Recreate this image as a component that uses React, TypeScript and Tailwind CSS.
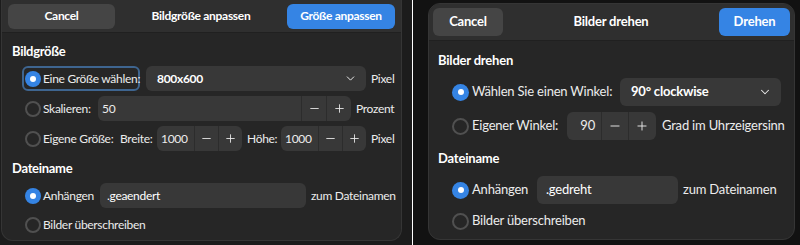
import React from 'react'
import { ChevronDown, Minus, Plus } from 'lucide-react'

type radioProps = {
    checked?: boolean
    size: number
}

const Radio: React.FC<radioProps> = ({ checked, size }) => {
    if (checked) {
        return (
            <span className="flex items-center justify-center rounded-full bg-[#3584e4] shrink-0" style={{ width: size, height: size }}>
                <span className="w-[6px] h-[6px] rounded-full bg-white" />
            </span>
        )
    }
    return <span className="rounded-full border-2 border-[#505050] shrink-0" style={{ width: size, height: size }} />
}

type spinProps = {
    value: string
    w: string
    textW: string
    btnW: string
    right?: boolean
    icon: number
}

const Spin: React.FC<spinProps> = ({ value, w, textW, btnW, right, icon }) => {
    return (
        <div className={`flex h-full shrink-0 rounded-[6px] bg-[#383838] ${w}`}>
            <div className={`flex items-center h-full px-[4px] ${textW} ${right ? 'justify-end pr-[6px]' : ''}`}>{value}</div>
            <div className={`flex items-center justify-center h-full border-l border-[#2c2c2c] ${btnW}`}>
                <Minus size={icon} strokeWidth={1.6} />
            </div>
            <div className={`flex items-center justify-center h-full border-l border-[#2c2c2c] ${btnW}`}>
                <Plus size={icon} strokeWidth={1.6} />
            </div>
        </div>
    )
}

const ResizeDialog = () => {
    return (
        <div className="w-[401px] h-[241px] ml-[1px] flex flex-col rounded-b-[12px] bg-[#262626] border-x border-b border-[#353535] overflow-hidden text-[12px] tracking-[-0.3px] text-[#ececec] whitespace-nowrap">
            <div className="h-[33px] shrink-0 flex items-center justify-between px-[6px] bg-[#2f2f2f] border-b border-[#202020]">
                <div className="w-[107px] h-[25px] rounded-[6px] bg-[#454545] flex items-center justify-center font-bold text-white">Cancel</div>
                <div className="font-bold text-white">Bildgröße anpassen</div>
                <div className="w-[108px] h-[25px] rounded-[6px] bg-[#3584e4] flex items-center justify-center font-bold text-white">Größe anpassen</div>
            </div>
            <div className="flex flex-col pl-[10px]">
                <div className="mt-[9px] h-[18px] leading-[18px] text-[13px] font-bold text-white">Bildgröße</div>

                <div className="mt-[6px] h-[25px] flex items-center ml-[10px]">
                    <div className="w-[118px] shrink-0 h-full flex items-center gap-[2px] pl-[1px] rounded-[6px] border-2 border-[#3e6590]">
                        <Radio checked size={16} />
                        <span>Eine Größe wählen:</span>
                    </div>
                    <div className="ml-[6px] w-[220px] shrink-0 h-full rounded-[6px] bg-[#383838] flex items-center justify-between pl-[11px] pr-[9px]">
                        <span className="font-bold text-white">800x600</span>
                        <ChevronDown size={13} strokeWidth={1.8} />
                    </div>
                    <span className="ml-[5px]">Pixel</span>
                </div>

                <div className="mt-[5px] h-[25px] flex items-center ml-[10px]">
                    <div className="w-[76px] shrink-0 h-full flex items-center gap-[2px] pl-[3px]">
                        <Radio size={16} />
                        <span>Skalieren:</span>
                    </div>
                    <Spin value="50" w="w-[253px]" textW="w-[204px]" btnW="w-[25px]" icon={13} />
                    <span className="ml-[5px]">Prozent</span>
                </div>

                <div className="mt-[5px] h-[25px] flex items-center ml-[10px]">
                    <div className="w-[98px] shrink-0 h-full flex items-center gap-[2px] pl-[3px]">
                        <Radio size={16} />
                        <span>Eigene Größe:</span>
                    </div>
                    <span className="w-[37px] shrink-0">Breite:</span>
                    <Spin value="1000" w="w-[85px]" textW="w-[37px]" btnW="w-[24px]" icon={13} />
                    <span className="ml-[5px] w-[34px] shrink-0">Höhe:</span>
                    <Spin value="1000" w="w-[85px]" textW="w-[37px]" btnW="w-[24px]" icon={13} />
                    <span className="ml-[5px]">Pixel</span>
                </div>

                <div className="mt-[8px] h-[18px] leading-[18px] text-[13px] font-bold text-white">Dateiname</div>

                <div className="mt-[6px] h-[25px] flex items-center ml-[10px]">
                    <div className="w-[78px] shrink-0 h-full flex items-center gap-[2px] pl-[3px]">
                        <Radio checked size={16} />
                        <span>Anhängen</span>
                    </div>
                    <div className="w-[206px] shrink-0 h-full rounded-[6px] bg-[#383838] flex items-center pl-[7px] text-white">.geaendert</div>
                    <span className="ml-[5px]">zum Dateinamen</span>
                </div>

                <div className="mt-[4px] h-[25px] flex items-center ml-[10px]">
                    <div className="h-full flex items-center gap-[2px] pl-[3px]">
                        <Radio size={16} />
                        <span>Bilder überschreiben</span>
                    </div>
                </div>
            </div>
        </div>
    )
}

const RotateDialog = () => {
    return (
        <div className="w-[367px] h-[237px] flex flex-col rounded-[12px] bg-[#262626] border border-[#353535] overflow-hidden text-[13px] tracking-[-0.2px] text-[#ececec] whitespace-nowrap">
            <div className="h-[37px] shrink-0 flex items-center justify-between px-[4px] bg-[#2f2f2f] border-b border-[#202020]">
                <div className="w-[70px] h-[28px] rounded-[6px] bg-[#454545] flex items-center justify-center font-bold text-white">Cancel</div>
                <div className="font-bold text-white">Bilder drehen</div>
                <div className="w-[71px] h-[28px] rounded-[6px] bg-[#3584e4] flex items-center justify-center font-bold text-white">Drehen</div>
            </div>
            <div className="flex flex-col pl-[9px]">
                <div className="mt-[9px] h-[20px] leading-[20px] font-bold text-white">Bilder drehen</div>

                <div className="mt-[8px] h-[28px] flex items-center ml-[11px]">
                    <div className="w-[165px] shrink-0 h-full flex items-center gap-[3px] pl-[3px]">
                        <Radio checked size={17} />
                        <span>Wählen Sie einen Winkel:</span>
                    </div>
                    <div className="ml-[6px] w-[161px] shrink-0 h-full rounded-[6px] bg-[#383838] flex items-center justify-between pl-[11px] pr-[9px]">
                        <span className="font-bold text-white">90° clockwise</span>
                        <ChevronDown size={14} strokeWidth={1.8} />
                    </div>
                </div>

                <div className="mt-[6px] h-[28px] flex items-center ml-[11px]">
                    <div className="w-[112px] shrink-0 h-full flex items-center gap-[3px] pl-[3px]">
                        <Radio size={17} />
                        <span>Eigener Winkel:</span>
                    </div>
                    <div className="ml-[6px] h-full shrink-0">
                        <Spin value="90" w="w-[89px]" textW="w-[34px]" btnW="w-[27px]" right icon={14} />
                    </div>
                    <span className="ml-[6px]">Grad im Uhrzeigersinn</span>
                </div>

                <div className="mt-[8px] h-[20px] leading-[20px] font-bold text-white">Dateiname</div>

                <div className="mt-[8px] h-[28px] flex items-center ml-[11px]">
                    <div className="w-[82px] shrink-0 h-full flex items-center gap-[3px] pl-[3px]">
                        <Radio checked size={17} />
                        <span>Anhängen</span>
                    </div>
                    <div className="ml-[6px] w-[141px] shrink-0 h-full rounded-[6px] bg-[#383838] flex items-center pl-[9px] text-white">.gedreht</div>
                    <span className="ml-[5px]">zum Dateinamen</span>
                </div>

                <div className="mt-[3px] h-[28px] flex items-center ml-[11px]">
                    <div className="h-full flex items-center gap-[3px] pl-[3px]">
                        <Radio size={17} />
                        <span>Bilder überschreiben</span>
                    </div>
                </div>
            </div>
        </div>
    )
}

export default function App() {
    return (
        <div className="flex w-[800px] h-[245px] bg-[#1c1c1c] font-['Lato',sans-serif] overflow-hidden">
            <div className="w-[412px] shrink-0">
                <ResizeDialog />
            </div>
            <div className="w-px shrink-0 bg-white" />
            <div className="flex-1 bg-[#121212] pt-[3px] pl-[15px]">
                <RotateDialog />
            </div>
        </div>
    )
}
